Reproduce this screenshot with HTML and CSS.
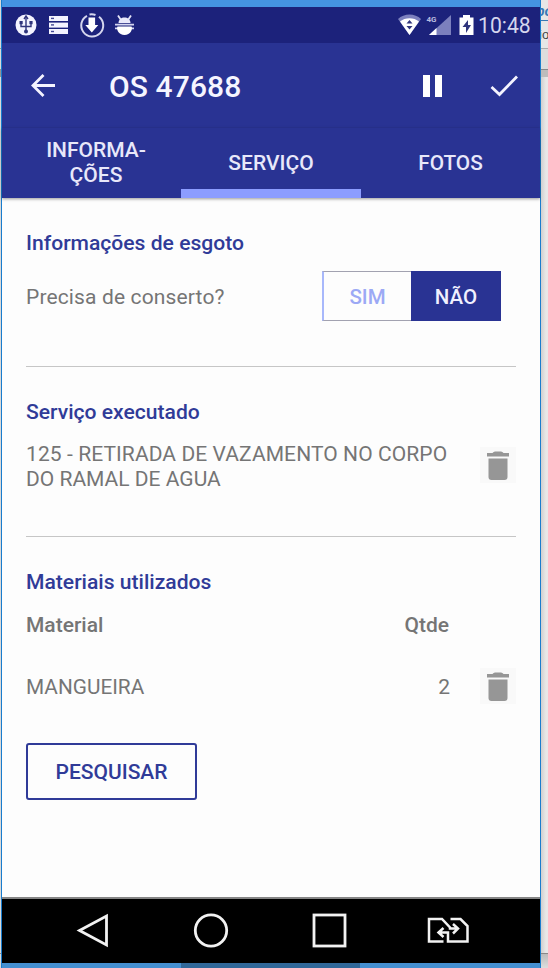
FILE: index.html
```html
<!DOCTYPE html>
<html lang="pt-BR">
<head>
<meta charset="utf-8">
<title>OS 47688</title>
<link rel="stylesheet" href="styles.css">
</head>
<body>
<div class="desktop">
  <div class="edge-left"><i class="edge-line"></i><i class="edge-dark"></i><i class="edge-line low"></i></div>
  <main class="window">
    <div class="window-top"></div>
    <div class="statusbar">
      <svg class="notifications" width="112" height="36" viewBox="0 0 112 36">
        <circle cx="24" cy="18" r="10.5" fill="#f4f4ff"/>
        <g fill="none" stroke="#30357c" stroke-width="1.4"><path d="M24 10v16M19 16v3.5h10V16"/><path d="M22 12l2-3 2 3"/></g>
        <g fill="#30357c"><rect x="17.5" y="14" width="3.2" height="3.2"/><rect x="27.4" y="14" width="3.2" height="3.2"/><circle cx="24" cy="24.5" r="2"/></g>
        <g fill="#f4f4ff"><rect x="47" y="9" width="19" height="5"/><rect x="47" y="15.6" width="19" height="5"/><rect x="47" y="22" width="19" height="5"/></g>
        <g fill="#454a96"><rect x="49" y="10.7" width="3" height="1.4"/><rect x="49" y="17.2" width="3" height="1.4"/><rect x="49" y="23.8" width="3" height="1.4"/></g>
        <path d="M85 8.8a11 11 0 1 0 12 1M87.5 7.5a11 11 0 0 1 6 .5" fill="none" stroke="#d5d6ee" stroke-width="2"/>
        <path d="M86.500 10.500h6.600v7.500h3.200L89.800 25.500 83.300 18h3.200z" fill="#fff"/>
      </svg>
      <svg class="bug" width="22" height="24" viewBox="0 0 22 24">
        <path d="M4 1.500l3 4.500M17 1.500l-3 4.500" stroke="#e4e4f6" stroke-width="1.8"/>
        <path d="M4.500 9c0-7.500 12-7.500 12 0z" fill="#e9e9fa"/>
        <path d="M1 10.700h19M1 14.300h19" stroke="#d4d5f0" stroke-width="1.8"/>
        <path d="M3.500 12.500h14c1.500 2.500-1 8.500-7 8.500s-8.500-6-7-8.500z" fill="#fff"/>
      </svg>
      <svg class="signals" width="79" height="36" viewBox="0 0 79 36">
        <path d="M0 12c6-6 17-6 23 0L11.500 28z" fill="#7c80bd"/><path d="M2 14.500c5-4.500 14-4.500 19 0L11.500 28z" fill="#fff"/>
        <path d="M8.500 16.500l3-3.500 3 3.500zM8.500 19l3 3.500 3-3.500z" fill="#30357c"/>
        <path d="M53 8v20H31z" fill="#7c80bd"/><path d="M38.500 21v7H31z" fill="#fff"/>
        <text x="28.500" y="14.500" class="net">4G</text>
        <path d="M61.500 10.500h3.500V8h7v2.500h3.500V28h-14z" fill="#fff"/><path d="M70 13l-5.500 7h3.500v6l5-8h-3z" fill="#30357c"/>
      </svg>
      <span class="clock">10:48</span>
    </div>
    <header class="appbar">
      <svg class="back" width="26" height="26" viewBox="0 0 26 26"><path d="M13.500 2L3 12.500 13.500 23M3 12.500h22" fill="none" stroke="#f4f4ff" stroke-width="2.800"/></svg>
      <h1>OS 47688</h1>
      <svg class="pause" width="20" height="22" viewBox="0 0 20 22"><path d="M0 0h7v22H0zM12 0h7v22h-7z" fill="#fff"/></svg>
      <svg class="check" width="28" height="22" viewBox="0 0 28 22"><path d="M1.500 12l8 7.500L27 1.500" fill="none" stroke="#f4f4ff" stroke-width="2.800"/></svg>
    </header>
    <nav class="tabs">
      <div class="tab"><span>INFORMA-<br>ÇÕES</span></div>
      <div class="tab active"><span>SERVIÇO</span></div>
      <div class="tab"><span>FOTOS</span></div>
    </nav>
    <div class="content">
      <section class="sewer">
        <h2>Informações de esgoto</h2>
        <div class="question"><span class="q">Precisa de conserto?</span>
          <div class="toggle"><span class="yes">SIM</span><span class="no">NÃO</span></div>
        </div>
      </section>
      <section class="service">
        <h2>Serviço executado</h2>
        <div class="row"><p><span class="line1">125 - RETIRADA DE VAZAMENTO NO CORPO</span><br>DO RAMAL DE AGUA</p>
          <div class="trash"><svg width="22" height="29" viewBox="0 0 22 29"><path d="M0 2h5.500q1-1.500 2.500-1.500h6q1.500 0 2.500 1.500H22v3.500H0zM1.500 7.500h19V26q0 3-3 3h-13q-3 0-3-3z" fill="#969696"/></svg></div>
        </div>
      </section>
      <section class="materials">
        <h2>Materiais utilizados</h2>
        <div class="thead"><span>Material</span><span>Qtde</span></div>
        <div class="mrow"><span class="name">MANGUEIRA</span><span class="count">2</span>
          <div class="trash"><svg width="22" height="29" viewBox="0 0 22 29"><path d="M0 2h5.500q1-1.500 2.500-1.500h6q1.500 0 2.500 1.500H22v3.500H0zM1.500 7.500h19V26q0 3-3 3h-13q-3 0-3-3z" fill="#969696"/></svg></div>
        </div>
        <div class="search">PESQUISAR</div>
      </section>
    </div>
    <footer class="navbar">
      <svg width="538" height="64" viewBox="0 0 538 64" fill="none" stroke="#f2f2f2" stroke-width="2.800">
        <path d="M104.500 17v29L77.500 31.500z"/><circle cx="209" cy="31.500" r="15.700"/><rect x="312" y="16" width="31" height="31"/>
        <g stroke-width="2.500"><path d="M441.500 42.500h-14.500V20H440l8 8.500v1h8M451 25l5 4.500-5 5M448.500 20h10l7 7v15.500h-19.500v-9h-9M441.500 29l-5 4.500 5 4.500"/></g>
      </svg>
    </footer>
    <div class="taskbar"><i></i></div>
  </main>
  <aside class="edge-right"><span class="cut link">po</span><span class="cut plain">io</span><i class="bar"></i><i class="rest"></i><i class="end"></i></aside>
</div>
</body>
</html>
```
FILE: styles.css
```css
* { box-sizing: border-box; }
body { margin: 0; font-family: Roboto, "Liberation Sans", sans-serif; font-size: 21px; color: #757575; }
i { display: block; font-style: normal; }
svg { display: block; flex: none; }
.desktop { display: grid; grid-template-columns: 1px 540px 7px; width: 548px; height: 968px; overflow: hidden; background: #dcdcdc; }
.edge-left { background: #d9d9d9; }
.edge-line { height: 49px; border-bottom: 1px solid #999; }
.edge-dark { height: 28px; border-bottom: 8px solid #949494; }
.edge-line.low { height: 877px; border-bottom: 1px solid #888; }
.window { border: solid #197ccd; border-width: 0 1px; background: #fdfdfd; display: flex; flex-direction: column; }
.window-top { height: 7px; background: #4594e2; }
.statusbar { height: 36px; background: #1c227b; display: flex; align-items: flex-start; }
.bug { margin-top: 7px; }
.signals { margin-left: 262px; }
.net { font-size: 8px; font-weight: 700; fill: #b9bbdf; }
.clock { font-size: 21.2px; line-height: 38px; color: #d5d6ed; margin-left: 1px; }
.appbar { height: 85px; background: #293393; display: flex; align-items: center; }
.back { margin-left: 28px; }
h1 { margin: 2px 0 0 53px; width: 140px; font-size: 30px; letter-spacing: .1px; line-height: 34px; font-weight: 500; color: #f5f5ff; white-space: nowrap; }
.pause { margin-left: 174px; }
.check { margin-left: 47px; }
.tabs { height: 70px; background: #293393; color: #e8e8fa; display: grid; grid-template-columns: 179px 180px 179px; line-height: 25px; font-weight: 500; text-align: center; box-shadow: 0 1px 3px #0006; }
.tab { display: flex; align-items: center; justify-content: center; }
.tab:first-child { padding-left: 9px; }
.tab.active { border-bottom: 9px solid #8c9dff; padding-top: 9px; }
.tab:last-child { font-size: 20.8px; }
.content { height: 701px; padding: 0 24px; border-bottom: 2px solid #858585; }
h2 { margin: 0; font-size: 21.1px; line-height: 24px; font-weight: 500; color: #303b98; }
.sewer { height: 169px; padding-top: 33px; border-bottom: 1px solid #c6c6c6; }
.question { display: flex; align-items: center; justify-content: space-between; margin-top: 16px; padding-right: 15px; }
.q { letter-spacing: .14px; padding-top: 2px; }
.toggle { display: grid; grid-template-columns: 89px 90px; height: 50px; line-height: 50px; font-size: 20.5px; font-weight: 500; text-align: center; }
.yes { border: 1px solid #a2a2b0; border-left: 2px solid #a8b8fb; border-right: 0; line-height: 48px; padding-top: 1px; height: 50px; color: #9ca9f5; }
.no { background: #293393; color: #f0f0ff; height: 50px; padding-top: 1px; }
.service { height: 170px; padding-top: 33px; border-bottom: 1px solid #c6c6c6; }
.row { display: flex; justify-content: space-between; margin-top: 18px; }
p { margin: 0; line-height: 25px; white-space: nowrap; }
.line1 { letter-spacing: .09px; }
.trash { flex: none; width: 36px; height: 36px; background: #f9f9f9; display: grid; place-items: center; }
.row .trash { margin-top: 5px; }
.materials { padding-top: 33px; }
.thead { display: flex; justify-content: space-between; font-weight: 500; line-height: 24px; padding-right: 67px; margin-top: 19px; }
.mrow { display: flex; align-items: center; margin-top: 31px; height: 36px; }
.name { font-size: 20.8px; }
.name, .count { padding-top: 1px; }
.count { margin-left: auto; margin-right: 30px; }
.search { margin-top: 39px; width: 171px; height: 57px; border: 2px solid #303b98; border-radius: 3px; text-align: center; line-height: 54px; font-weight: 500; color: #303b98; }
.navbar { height: 64px; background: #000; }
.taskbar { height: 5px; background: #448fd0; padding-left: 179px; }
.taskbar i { width: 179px; height: 5px; background: #316899; }
.edge-right { background: #e6e6e6; overflow: hidden; display: flex; flex-direction: column; font-family: "Liberation Sans", sans-serif; }
.cut { display: block; white-space: nowrap; }
.link { height: 21px; border-bottom: 1px solid #3779b4; color: #3779b4; font-size: 14px; font-style: italic; font-weight: 700; line-height: 22px; text-indent: -5px; }
.plain { height: 28px; border-bottom: 1px solid #aaa; font-size: 13px; line-height: 28px; color: #444; text-indent: -2px; }
.bar { height: 28px; background: linear-gradient(#ddd 0 20px, #888 20px 21px, #bcbcbc 21px); }
.rest { height: 876px; background: linear-gradient(90deg, #cfcfcf, #e8e8e8 5px); }
.end { height: 15px; border-top: 1px solid #888; background: linear-gradient(#bbb, #ddd); }
```
